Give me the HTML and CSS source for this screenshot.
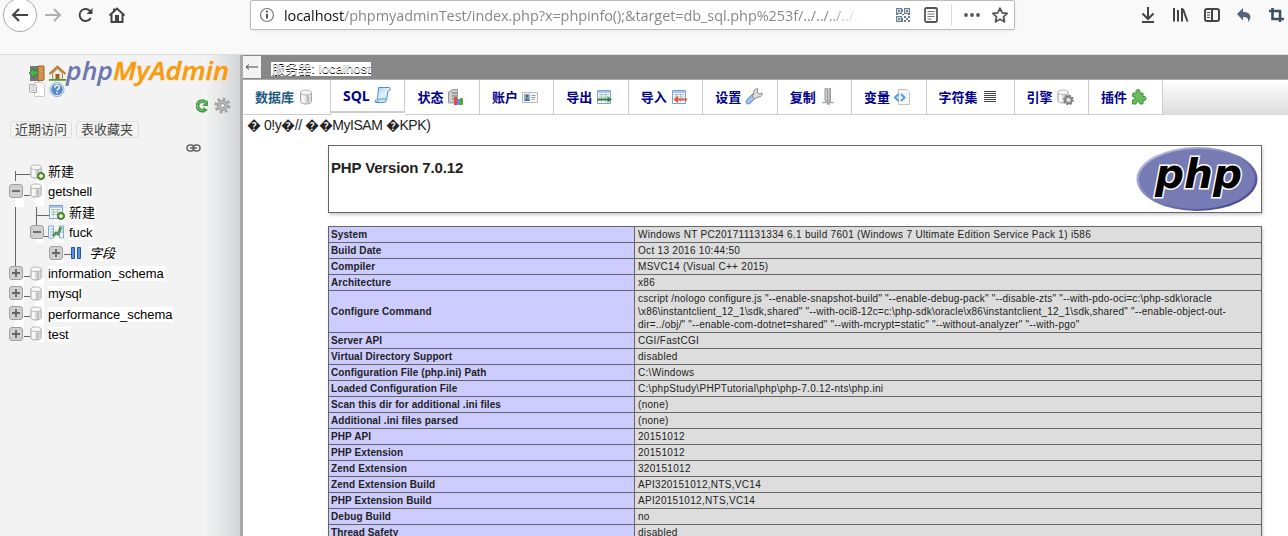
FILE: index.html
```html
<!DOCTYPE html>
<html lang="zh-CN">
<head>
<meta charset="utf-8">
<title>phpMyAdmin</title>
<link rel="stylesheet" href="styles.css">
</head>
<body>
<svg class="defs" width="0" height="0" aria-hidden="true">
  <defs>
    <linearGradient id="metal" x1="0" x2="1" y1="0" y2="0"><stop offset="0" stop-color="#ddd"/><stop offset=".25" stop-color="#fff"/><stop offset=".6" stop-color="#cfcfcf"/><stop offset="1" stop-color="#e4e4e4"/></linearGradient>
    <linearGradient id="blue" x1="0" x2="1" y1="0" y2="1"><stop offset="0" stop-color="#9cc8f0"/><stop offset=".5" stop-color="#e4f2fd"/><stop offset="1" stop-color="#a5cdf0"/></linearGradient>
    <symbol id="db" viewBox="0 0 16 16"><path d="M2.500 3.500v9c0 1.500 2.500 2.500 5.500 2.500s5.500-1 5.500-2.500v-9" fill="url(#metal)" stroke="#a6a6a6"/><ellipse cx="8" cy="3.500" rx="5.500" ry="2.500" fill="#f6f6f6" stroke="#b4b4b4"/><path d="M10 7v6" stroke="#bbb" stroke-width="2"/></symbol>
    <symbol id="plusdot" viewBox="0 0 8 8"><circle cx="4" cy="4" r="3.500" fill="#5d9b35" stroke="#39721b"/><path d="M4 2v4M2 4h4" stroke="#fff" stroke-width="1.300"/></symbol>
    <symbol id="sheet" viewBox="0 0 16 16"><path d="M1.500 1.500h13v13h-13z" fill="#f1f7fd" stroke="#7ba1cf"/><path d="M2 3h12" stroke="#a9c6e8" stroke-width="2"/><path d="M3 5.500h10M3 8h10M3 10.500h10M5.500 5v8M9.500 5v8" stroke="#9bb9a5" stroke-width=".8"/></symbol>
    <symbol id="plus" viewBox="0 0 14 14"><rect x=".5" y=".5" width="13" height="13" rx="2.500" fill="#d0d0d0" stroke="#a0a0a0"/><path d="M7 3v8M3 7h8" stroke="#666" stroke-width="1.800"/></symbol>
    <symbol id="minus" viewBox="0 0 14 14"><rect x=".5" y=".5" width="13" height="13" rx="2.500" fill="#d0d0d0" stroke="#a0a0a0"/><path d="M3 7h8" stroke="#666" stroke-width="1.800"/></symbol>
    <symbol id="gear" viewBox="0 0 16 16"><circle cx="8" cy="8" r="6.300" fill="none" stroke="#a2a2a2" stroke-width="2.600" stroke-dasharray="2.600 2.350"/><circle cx="8" cy="8" r="4.200" fill="#ddd" stroke="#aaa" stroke-width="2.400"/><circle cx="8" cy="8" r="2" fill="#f3f3f3" stroke="#999"/></symbol>
  </defs>
</svg>

<header class="browser">
  <svg class="nav" width="130" height="36" viewBox="0 0 130 36">
    <circle cx="20" cy="15" r="16.500" fill="#fff" stroke="#aaa"/>
    <path d="M13 15h15M19 9l-6 6 6 6" fill="none" stroke="#444" stroke-width="2"/>
    <path d="M45 15h15M54 9l6 6-6 6" fill="none" stroke="#b0b0b0" stroke-width="2"/>
    <path d="M90.500 11.500A6 6 0 1 0 90.800 18" fill="none" stroke="#444" stroke-width="2"/><path d="M92.500 8v6h-6z" fill="#444"/>
    <path d="M109.500 15.500L117 8.500l7.500 7M111.500 14v8h11v-8M114 8.500v3" fill="none" stroke="#444" stroke-width="2"/><path d="M115 15h4v7h-4z" fill="#444"/>
  </svg>
  <div class="address">
    <svg width="16" height="16" viewBox="0 0 16 16"><circle cx="8" cy="8" r="6.500" fill="none" stroke="#777" stroke-width="1.200"/><path d="M8 7v4.500" stroke="#555" stroke-width="2"/><circle cx="8" cy="4.700" r="1.100" fill="#555"/></svg>
    <div class="url"><b>localhost</b>/phpmyadminTest/index.php?x=phpinfo();&amp;target=db_sql.php%253f/../../../../..</div>
    <svg class="page-actions" width="120" height="28" viewBox="0 0 120 28">
      <g fill="none" stroke="#6b7f90" stroke-width="1.200"><path d="M4.600 7.600h4.800v4.800H4.600zM12.600 7.600h4.800v4.800h-4.800zM4.600 15.600h4.800v4.800H4.600z"/></g>
      <path d="M6 9h2v2H6zM14 9h2v2h-2zM6 17h2v2H6zM12 15h2v2h-2zM16 15h2v2h-2zM14 17h2v2h-2zM12 19h2v2h-2zM16 19h2v2h-2zM10 13h2v1h-2zM4 13h2v1H4zM16 13h2v1h-2zM10 8h1v3h-1zM10 17h1v4h-1z" fill="#6b7f90"/>
      <rect x="33" y="7" width="12" height="14" rx="1.500" fill="none" stroke="#555" stroke-width="1.800"/><path d="M35.500 10.500h7M35.500 13h7M35.500 15.500h7M35.500 18h4" stroke="#777"/>
      <path d="M59.500 3v22" stroke="#ddd"/>
      <g fill="#555"><circle cx="74" cy="14" r="1.900"/><circle cx="80" cy="14" r="1.900"/><circle cx="86" cy="14" r="1.900"/></g>
      <path d="M108 7.200l2.200 4.600 5 .6-3.700 3.400 1 5-4.500-2.500-4.500 2.500 1-5-3.700-3.400 5-.6z" fill="none" stroke="#555" stroke-width="1.800" stroke-linejoin="round"/>
    </svg>
  </div>
  <svg class="tools" width="148" height="30" viewBox="1140 0 148 30">
    <g fill="none" stroke="#444" stroke-width="2"><path d="M1148 7v12M1142.500 13.500l5.500 5.500 5.500-5.500M1142 22h12"/><path d="M1174 8v13.500M1178 10v11.500M1182 8v13.500M1183 9l4.500 12.500"/><rect x="1205" y="9" width="14" height="12" rx="2"/><path d="M1212 9v12"/><path d="M1207 12.500h3M1207 15h3M1207 17.500h3" stroke-width="1"/></g>
    <path d="M1237 14l6-6v4c7-.5 10 5 5 10 .700-3.500-.5-5-5-5v3.500z" fill="#526579"/>
    <path d="M1272.500 8v11h11.500M1269 11h11v11" fill="none" stroke="#3f5062" stroke-width="2.600"/>
  </svg>
</header>

<div class="workspace">
  <aside class="sidebar">
    <svg class="brand" width="240" height="48" viewBox="0 55 240 48">
      <path d="M30 66h9v15h-9z" fill="#777"/><path d="M38 66h6v14l-6 1z" fill="#d2954b" stroke="#93602a"/><path d="M29 73l5-5v3h4v4h-4v3z" fill="#4dae52" stroke="#267e30" stroke-width=".7"/>
      <path d="M49.500 74l8-7.500 8 7.500" fill="none" stroke="#b9772f" stroke-width="2"/><path d="M52.500 73.500l5-5 5 5v6h-10z" fill="#f7ead0" stroke="#a8855c"/><path d="M55.500 74h4v6h-4z" fill="#8b6535"/><path d="M49 79h17v1.800H49z" fill="#4b9d36"/>
      <text class="logo-php" x="66" y="80" textLength="47" lengthAdjust="spacingAndGlyphs">php</text><text class="logo-admin" x="113" y="80" textLength="116" lengthAdjust="spacingAndGlyphs">MyAdmin</text>
      <path d="M34.500 82.500h7l3 3v11h-10z" fill="#fff" stroke="#ccc"/><path d="M29.500 84.500h5q2 0 2 2v6h-5q-2 0-2-2z" fill="#eee" stroke="#aaa"/><path d="M32 86.500h2v4h-2z" fill="#fff" stroke="#aaa" stroke-width=".7"/>
      <circle cx="57" cy="89.500" r="6.300" fill="#568cc7" stroke="#fff"/><circle cx="57" cy="89.500" r="7" fill="none" stroke="#8bafd7"/><path d="M54.700 87.700c0-3.700 5-3 4.700-.3-.2 1.700-2.300 1.500-2.300 3.400M57 92v1.500" fill="none" stroke="#fff" stroke-width="1.500"/>
    </svg>
    <div class="side-tools">
      <svg width="13" height="14" viewBox="0 0 13 14"><path d="M9.500 3.500A4.700 4.700 0 1 0 7 11.500" fill="none" stroke="#3d9645" stroke-width="3.600"/><path d="M9 3.500A4.500 4.500 0 1 0 7 11" fill="none" stroke="#92d38b"/><path d="M12 1v6H6zM7 8l5 3-5 3z" fill="#49a44d"/></svg>
      <svg width="17" height="17"><use href="#gear"/></svg>
    </div>
    <div class="quick"><span>近期访问</span><span>表收藏夹</span></div>
    <svg class="link" width="15" height="8" viewBox="0 0 15 8"><g fill="none" stroke="#666" stroke-width="1.500"><rect x="1" y="1" width="7" height="6" rx="3"/><rect x="7" y="1" width="7" height="6" rx="3"/><path d="M4 4h7"/></g></svg>
    <ul class="tree">
      <li><svg width="45" height="20"><path d="M15.500 10v10M15 13.500h15" class="branch"/><use href="#db" x="28" y="3" width="16" height="15"/><use href="#plusdot" x="37" y="11" width="8" height="8"/></svg><span>新建</span></li>
      <li class="tall"><svg width="45" height="21"><path class="patch" d="M15 16h9v5h-9zM35 0h9v21h-9z"/><path d="M24 14.500h6" class="branch"/><use href="#minus" x="9" y="3" width="14" height="14"/><use href="#db" x="28" y="2" width="16" height="15"/></svg><span>getshell</span></li>
      <li><svg width="65" height="20"><path class="patch" d="M15 0h9v5h-9zM35 0h9v4h-9zM55 12h9v8h-9z"/><path d="M15.500 5v15M36.500 5v15M36 13.500h13" class="branch"/><use href="#sheet" x="48" y="2" width="16" height="16"/><use href="#plusdot" x="57" y="10" width="8" height="8"/></svg><span>新建</span></li>
      <li class="tall"><svg width="65" height="21"><path class="patch" d="M36 16h8v5h-8zM55 16h9v5h-9z"/><path d="M15.500 0v21M36.500 0v5M44 14.500h5" class="branch"/><use href="#minus" x="30" y="3" width="14" height="14"/><path d="M48.500 4h5v12h-5zM59.500 4h4v12h-4z" fill="#eef6fe" stroke="#81a7d3"/><path d="M50 7h3M50 10h3M50 13h3M60 7h3M60 10h3" stroke="#91aece"/><path d="M53 14l3-3 2 1 3-7" fill="none" stroke="#4d9951" stroke-width="2.800"/></svg><span>fuck</span></li>
      <li><svg width="84" height="20"><path class="patch" d="M56 16h8v4h-8z"/><path d="M15.500 0v20M64 11.500h7" class="branch"/><use href="#plus" x="49" y="3" width="14" height="14"/><path d="M71.500 4.500h3v11h-3zM77.500 4.500h3v11h-3z" fill="#5b91e1" stroke="#2456a9"/></svg><span class="fields">字段</span></li>
      <li><svg width="45" height="20"><path class="patch" d="M15 15h9v5h-9zM35 15h9v5h-9z"/><path d="M15.500 0v5M24 13.500h6" class="branch"/><use href="#plus" x="9" y="3" width="14" height="14"/><use href="#db" x="28" y="3" width="16" height="15"/></svg><span>information_schema</span></li>
      <li class="tall"><svg width="45" height="21"><path class="patch" d="M15 0h9v21h-9zM35 0h9v21h-9z"/><path d="M24 13.500h6" class="branch"/><use href="#plus" x="9" y="3" width="14" height="14"/><use href="#db" x="28" y="3" width="16" height="15"/></svg><span>mysql</span></li>
      <li><svg width="45" height="20"><path class="patch" d="M15 0h9v20h-9zM35 0h9v20h-9z"/><path d="M24 12.500h6" class="branch"/><use href="#plus" x="9" y="2" width="14" height="14"/><use href="#db" x="28" y="2" width="16" height="15"/></svg><span>performance_schema</span></li>
      <li><svg width="45" height="20"><path class="patch" d="M15 0h9v5h-9zM35 0h9v18h-9z"/><path d="M24 12.500h6" class="branch"/><use href="#plus" x="9" y="3" width="14" height="14"/><use href="#db" x="28" y="2" width="16" height="15"/></svg><span>test</span></li>
    </ul>
  </aside>

  <main>
    <div class="server"><span class="collapse"><svg width="14" height="10" viewBox="0 0 14 10"><path d="M1 5h12M4 2.500L1 5l3 2.500" fill="none" stroke="#444"/></svg></span><span class="server-name">服务器: localhost</span></div>
    <nav class="tabs">
      <a class="t88 hover">数据库<svg width="16" height="16"><use href="#db"/></svg></a>
      <a class="sql">SQL<svg width="18" height="18" viewBox="0 0 18 18"><path d="M4.500 1.500h11q2 2-.5 3.500h-1l-1.500 9.500q-1 2-3 2H1.500q-1-2 1-3.500h1z" fill="url(#blue)" stroke="#4e91cf"/><path d="M2 16q3-.5 3-3h7" fill="none" stroke="#4e91cf"/></svg></a>
      <a>状态<svg width="16" height="16" viewBox="0 0 16 16"><path d="M1.500 3l4-2.500h5V14h-9z" fill="#ccc" stroke="#999"/><path d="M5 4h5M5 7h5M5 10h3" stroke="#777"/><path d="M7 8h3v8H7z" fill="#e44b3d"/><path d="M10 10h3v6h-3z" fill="#5a8fe2"/><path d="M13 9h3v7h-3z" fill="#57a73b"/></svg></a>
      <a>账户<svg width="16" height="16" viewBox="0 0 16 16"><path d="M.5 3.500h15v10H.5z" fill="#f6f6f6" stroke="#bbb"/><path d="M2 5h6v7H2z" fill="#8cb9e8"/><circle cx="5" cy="7" r="1.600" fill="#8d5b36"/><path d="M2.500 12q0-3 2.500-3t2.500 3z" fill="#457cb8"/><path d="M9.500 6.500h4M9.500 8.500h4M9.500 10.500h3" stroke="#999"/></svg></a>
      <a>导出<svg width="16" height="16" viewBox="0 0 16 16"><use href="#sheet" width="16" height="16"/><path d="M1 10.500h12" stroke="#37813b" stroke-width="2"/><path d="M11.500 7.500l4.500 3-4.500 3z" fill="#37813b"/></svg></a>
      <a>导入<svg width="16" height="16" viewBox="0 0 16 16"><use href="#sheet" width="16" height="16"/><path d="M6 10.500h10" stroke="#f04e45" stroke-width="2"/><path d="M7 7l-4.500 3.500L7 14z" fill="#f04e45"/></svg></a>
      <a>设置<svg width="18" height="17" viewBox="0 0 18 17"><path d="M3.500 13.500L9 8" stroke="#638fcb" stroke-width="5.500" stroke-linecap="round"/><path d="M3.500 13.500L9 8" stroke="#a5c6f0" stroke-width="3.500" stroke-linecap="round"/><path d="M9 6c-1-3 1-6 4-5l-1 3 2 2 3-1c1 3-3 5-5 4L10 11 7 8z" fill="#ddd" stroke="#888"/></svg></a>
      <a>复制<svg width="16" height="17" viewBox="0 0 16 17"><path d="M5 .5h2.500v12H5zM9 .5h1.500v12H9z" fill="#ccc" stroke="#999"/><path d="M2 14.500h12M5 13h6M7 16h3" stroke="#aaa" stroke-width="1.500"/></svg></a>
      <a>变量<svg width="16" height="16" viewBox="0 0 16 16"><path d="M4.500.5h8l3 3v12h-11z" fill="#f6f6f6" stroke="#c0c0c0"/><path d="M4.500 5L1 8.500 4.500 12M7 5l3.500 3.500L7 12" fill="none" stroke="#52a0dc" stroke-width="2"/></svg></a>
      <a class="t88">字符集<svg width="16" height="16" viewBox="0 0 16 16"><path d="M2 2.500h12M2 4.500h12M2 6.500h12M2 8.500h12M2 10.500h12M2 12.500h12" stroke="#444"/></svg></a>
      <a>引擎<svg width="17" height="16" viewBox="0 0 17 16"><use href="#db" x="-2" width="16" height="15"/><circle cx="11.500" cy="11" r="3.500" fill="#bbb" stroke="#777" stroke-width="1.500"/><circle cx="11.500" cy="11" r="4.600" fill="none" stroke="#777" stroke-width="1.500" stroke-dasharray="1.800 1.800"/><circle cx="11.500" cy="11" r="1.200" fill="#fff"/></svg></a>
      <a>插件<svg width="16" height="16" viewBox="0 0 16 16"><path d="M2 4h3.500q-1.500-3.500 1.500-3.500T8.500 4H12v3.500q3-.5 3 2t-3 2V15H9q0-2.500-2-2.500T5 15H1.500v-4q2.500 0 2.500-1.800T1.500 7.500z" fill="#69bb5d" stroke="#3e943d"/></svg></a>
      <i></i>
    </nav>
    <p class="garbage">� 0!y�// ��MyISAM �KPK)</p>

    <section class="info">
      <div class="version"><h1>PHP Version 7.0.12</h1>
        <svg width="122" height="65" viewBox="0 0 122 65"><defs><linearGradient id="rim" x1="0" y1="0" x2="1" y2="1"><stop offset=".15" stop-color="#b4b8dc"/><stop offset=".5" stop-color="#777bb3"/><stop offset=".85" stop-color="#484893"/></linearGradient></defs><ellipse cx="61" cy="32" rx="60.500" ry="32" fill="url(#rim)"/><ellipse cx="61" cy="32" rx="58" ry="30" fill="#777bb3"/><text class="php-mark" x="19" y="41" textLength="87" lengthAdjust="spacingAndGlyphs">php</text></svg>
      </div>
      <table>
        <tr><th>System</th><td>Windows NT PC201711131334 6.1 build 7601 (Windows 7 Ultimate Edition Service Pack 1) i586</td></tr>
        <tr><th>Build Date</th><td>Oct 13 2016 10:44:50</td></tr>
        <tr><th>Compiler</th><td>MSVC14 (Visual C++ 2015)</td></tr>
        <tr><th>Architecture</th><td>x86</td></tr>
        <tr class="configure"><th>Configure Command</th><td>cscript /nologo configure.js "--enable-snapshot-build" "--enable-debug-pack" "--disable-zts" "--with-pdo-oci=c:\php-sdk\oracle<br>\x86\instantclient_12_1\sdk,shared" "--with-oci8-12c=c:\php-sdk\oracle\x86\instantclient_12_1\sdk,shared" "--enable-object-out-<br>dir=../obj/" "--enable-com-dotnet=shared" "--with-mcrypt=static" "--without-analyzer" "--with-pgo"</td></tr>
        <tr><th>Server API</th><td>CGI/FastCGI</td></tr>
        <tr><th>Virtual Directory Support</th><td>disabled</td></tr>
        <tr><th>Configuration File (php.ini) Path</th><td>C:\Windows</td></tr>
        <tr><th>Loaded Configuration File</th><td>C:\phpStudy\PHPTutorial\php\php-7.0.12-nts\php.ini</td></tr>
        <tr><th>Scan this dir for additional .ini files</th><td>(none)</td></tr>
        <tr><th>Additional .ini files parsed</th><td>(none)</td></tr>
        <tr><th>PHP API</th><td>20151012</td></tr>
        <tr><th>PHP Extension</th><td>20151012</td></tr>
        <tr><th>Zend Extension</th><td>320151012</td></tr>
        <tr><th>Zend Extension Build</th><td>API320151012,NTS,VC14</td></tr>
        <tr><th>PHP Extension Build</th><td>API20151012,NTS,VC14</td></tr>
        <tr><th>Debug Build</th><td>no</td></tr>
        <tr><th>Thread Safety</th><td>disabled</td></tr>
      </table>
    </section>
  </main>
</div>
</body>
</html>
```

FILE: styles.css
```css
* { box-sizing: border-box; }
body { margin: 0; width: 1288px; height: 536px; overflow: hidden; background: #fff; color: #222; font: 13px "Liberation Sans", "Noto Sans CJK SC", sans-serif; }
svg { flex: none; display: block; }
.defs { position: absolute; }
.browser { display: flex; align-items: flex-start; height: 55px; background: #f9f9f9; border-bottom: 1px solid #ddd; }
.nav { margin-right: 120px; }
.address { display: flex; align-items: center; width: 765px; height: 30px; padding: 0 0 0 8px; background: #fff; border: 1px solid #bbb; border-radius: 2px; box-shadow: 0 1px 3px #0001; }
.url { width: 577px; margin-left: 9px; white-space: nowrap; font: 14.5px "Open Sans", sans-serif; letter-spacing: -.08px; color: #888; -webkit-mask-image: linear-gradient(90deg, #000 94%, transparent); mask-image: linear-gradient(90deg, #000 94%, transparent); }
.url b { font-weight: 400; color: #111; }
.page-actions { margin-left: 31px; }
.tools { margin-left: 125px; }
.workspace { display: flex; height: 481px; }
.sidebar { width: 243px; flex: none; border-right: 3px solid #a9a9a9; background: linear-gradient(90deg, #f3f3f3 205px, #e5e6e7 222px, #d2d4d5 240px); }
.brand { overflow: visible; }
.logo-php, .logo-admin { font: italic 600 24.5px "Open Sans", sans-serif; fill: #6c78af; }
.logo-admin { fill: #f89c0e; stroke: #f89c0e; stroke-width: .4px; }
.side-tools { display: flex; align-items: center; gap: 5px; height: 17px; margin: -6px 0 0 196px; }
.quick { display: flex; gap: 4px; margin: 7px 0 0 10px; }
.quick span { height: 17px; padding: 0 4px; border: 1px solid #ddd; border-radius: 3px; font-size: 13px; line-height: 15px; color: #444; white-space: nowrap; }
.quick span:first-child { width: 62px; }
.quick span:last-child { width: 63px; }
.link { margin: 6px 0 0 186px; }
.tree { margin: 9px 0 0; padding: 0; list-style: none; }
.tree li { display: flex; align-items: center; height: 20px; color: #000; }
.tree li.tall { height: 21px; }
.tree span { height: 15px; margin-left: 3px; padding-right: 1px; background: #fff; line-height: 16px; letter-spacing: -.08px; }
.tree svg[width="65"] + span { margin-left: 4px; }
.tree .fields { margin-left: 5px; font-style: italic; }
.branch { fill: none; stroke: #666; }
.patch { fill: #fff; }
main { width: 1045px; }
.server { display: flex; align-items: center; height: 25px; border-bottom: 1px solid #aaa; background: #888; }
.collapse { display: grid; place-items: center; width: 18px; height: 22px; background: #f3f3f3; }
.server-name { height: 14px; margin: 3px 0 0 10px; padding: 0 0 0 1px; background: #fff; color: #fff; text-shadow: 0 1px 0 #000; font-size: 13px; line-height: 14px; letter-spacing: .1px; white-space: nowrap; }
.tabs { display: flex; height: 35px; }
.tabs a { display: flex; align-items: center; gap: 4px; width: 74.450px; padding: 0 0 1px 12px; border-right: 1px solid #ccc; border-bottom: 1px solid #ccc; font-weight: 700; color: #00008b; white-space: nowrap; }
.tabs a.t88 { width: 88px; }
.tabs a.hover { color: #235a81; }
.tabs a.sql { height: 33px; font-size: 14px; font-family: "Open Sans", sans-serif; border-bottom-width: 2px; }
.tabs i { flex: 1; background: linear-gradient(#fff, #dcdcdc); }
.garbage { height: 30px; margin: 0; padding: 2px 0 0 4px; font-size: 14px; line-height: 16px; letter-spacing: -.45px; }
.info { width: 934px; margin-left: 85px; }
.version { display: flex; justify-content: space-between; height: 68px; padding: 1px 3px 0 2px; border: 1px solid #666; box-shadow: 1px 2px 3px #ccc; }
h1 { margin: 12px 0 0; font-size: 15px; line-height: 17px; letter-spacing: -.15px; }
.php-mark { font: italic 700 41px "DejaVu Sans", sans-serif; fill: #000; stroke: #fff; stroke-width: 3px; paint-order: stroke; }
table { width: 934px; margin-top: 13px; border-collapse: collapse; table-layout: fixed; box-shadow: 1px 2px 3px #ccc; }
tr { height: 16px; }
th, td { padding: 0 3px; border: 1px solid #666; font-size: 10px; line-height: 13px; text-align: left; white-space: nowrap; }
th { width: 306px; padding-left: 2px; background: #ccf; letter-spacing: .1px; }
td { background: #ddd; letter-spacing: .3px; }
.configure { height: 42px; }
.configure td { letter-spacing: .2px; }
```
